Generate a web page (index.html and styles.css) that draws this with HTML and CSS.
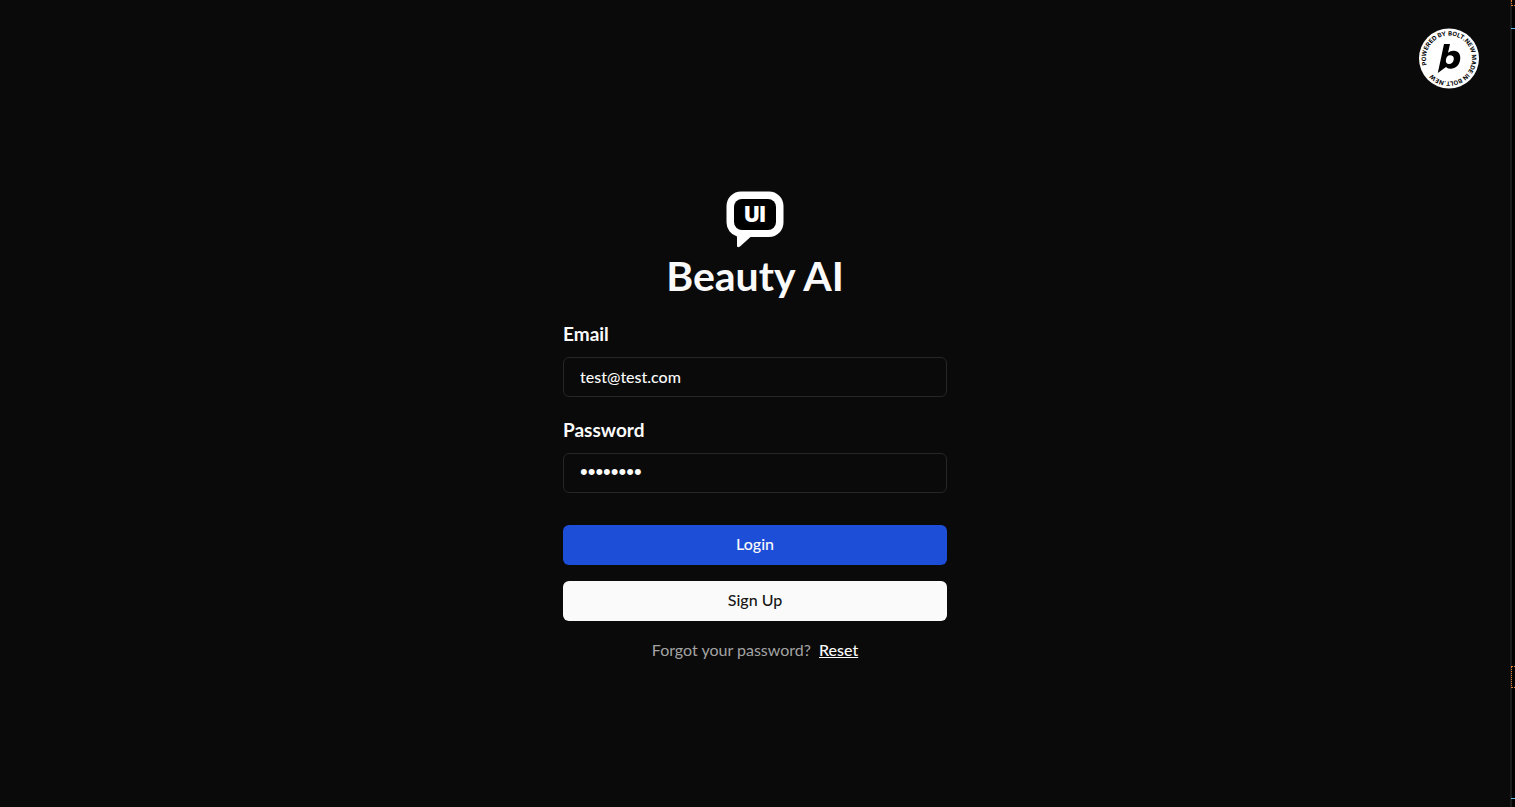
FILE: index.html
```
<!DOCTYPE html>
<html lang="en">
<head>
<meta charset="utf-8">
<meta name="viewport" content="width=device-width, initial-scale=1">
<title>Beauty AI</title>
<link rel="stylesheet" href="styles.css">
</head>
<body>
<main class="page">
  <form class="login">
    <svg class="logo" viewBox="0 0 64 64" aria-hidden="true">
      <path class="logo-bubble" d="M18 4.500H46A14.500 14.500 0 0 1 60.500 19V35.500A14.500 14.500 0 0 1 46 50H27.500L17 59.500Q14 61.500 14 58.500V49.400A14.500 14.500 0 0 1 3.500 35.500V19A14.500 14.500 0 0 1 18 4.500Z"/>
      <rect class="logo-screen" x="11" y="12" width="42" height="31" rx="8"/>
      <text class="logo-text" x="32" y="35" text-anchor="middle">UI</text>
    </svg>
    <h1 class="title">Beauty AI</h1>
    <label class="label" for="email">Email</label>
    <input class="field" id="email" type="email" value="test@test.com">
    <label class="label label-next" for="password">Password</label>
    <input class="field field-password" id="password" type="password" value="password">
    <button class="button button-login" type="submit">Login</button>
    <button class="button button-signup" type="button">Sign Up</button>
    <p class="hint">Forgot your password? <a class="reset" href="#">Reset</a></p>
  </form>
</main>
<aside class="rail">
  <span class="dots dots-top"></span>
  <span class="mark mark-top"></span>
  <span class="dots dots-mid"></span>
  <span class="mark mark-bottom"></span>
</aside>
<a class="badge" href="#" aria-label="Powered by Bolt.new">
  <svg class="badge-art" viewBox="0 0 60 61">
    <circle class="badge-disc" cx="30" cy="30.500" r="30"/>
    <path id="ring" fill="none" d="M7.900 37A23 23 0 0 1 52.100 24A23 23 0 0 1 7.900 37"/>
    <text class="ring-text"><textPath href="#ring">POWERED BY BOLT.NEW MADE IN BOLT.NEW</textPath></text>
    <path class="badge-b" fill-rule="evenodd" d="M25 16H31L29 24.800Q31.500 22.500 35 22.800C39.500 23.100 41.800 26.500 41.200 31.300C40.500 37.300 36.500 40.800 31.800 40.800Q28.800 40.800 27 38.900L18.800 45ZM31 27.300C28.800 27.300 27.200 29.300 26.900 32C26.600 34.500 27.800 36.100 30 36.100C32.500 36.100 34.500 34.100 34.800 31.300C35.100 28.800 33.500 27.300 31 27.300Z"/>
  </svg>
</a>
</body>
</html>
```
FILE: styles.css
```
* {
  box-sizing: border-box;
}

body {
  display: flex;
  min-height: 100vh;
  margin: 0;
  background: #0a0a0a;
  color: #fafafa;
  font-family: Lato, "Open Sans", sans-serif;
  font-size: 16px;
}

.page {
  display: flex;
  flex: 1;
  align-items: center;
  justify-content: center;
  padding-top: 42px;
}

.login {
  display: flex;
  flex-direction: column;
  width: 100%;
  max-width: 384px;
}

.logo {
  align-self: center;
  width: 64px;
  height: 64px;
}

.logo-bubble {
  fill: #fff;
}

.logo-screen {
  fill: #000;
}

.logo-text {
  fill: #fff;
  font-family: Inter, sans-serif;
  font-size: 21px;
  font-weight: 900;
}

.title {
  margin: 5px 0 24px;
  font-size: 41px;
  font-weight: 700;
  line-height: 40px;
  text-align: center;
}

.label {
  margin-bottom: 9px;
  font-size: 19px;
  font-weight: 700;
  line-height: 28px;
}

.label-next {
  margin-top: 19px;
}

.field {
  width: 100%;
  height: 40px;
  padding: 0 16px 2px;
  border: 1px solid #262626;
  border-radius: 6px;
  outline: none;
  background: transparent;
  color: #fafafa;
  font: 500 16px/24px Lato, sans-serif;
}

.field-password {
  font: 22px/24px "Liberation Sans", sans-serif;
}

.button {
  height: 40px;
  padding: 0 16px 2px;
  border: 0;
  border-radius: 6px;
  font: 500 16px/24px Lato, sans-serif;
  cursor: pointer;
}

.button-login {
  margin-top: 32px;
  background: #1d4ed8;
  color: #fafafa;
}

.button-signup {
  margin-top: 16px;
  background: #fafafa;
  color: #171717;
}

.hint {
  margin: 17px 0 0;
  color: #a3a3a3;
  line-height: 24px;
  text-align: center;
}

.reset {
  margin-left: 4px;
  color: #fafafa;
  font-weight: 500;
}

.badge {
  position: absolute;
  top: 28px;
  right: 36px;
  width: 60px;
  height: 61px;
}

.badge-art {
  display: block;
  width: 100%;
  height: 100%;
}

.badge-disc {
  fill: #fff;
}

.badge-b {
  fill: #000;
}

.ring-text {
  fill: #000;
  font-family: Inter, sans-serif;
  font-size: 6px;
  font-weight: 700;
}

.rail {
  position: relative;
  width: 5px;
  border-left: 2px solid #1c1c1c;
  background: #000;
}

.mark {
  position: absolute;
  right: 0;
  width: 4px;
  height: 1px;
  background: #5fb8e6;
}

.mark-top {
  top: 28px;
}

.mark-bottom {
  bottom: 8px;
}

.dots {
  position: absolute;
  right: 0;
  width: 4px;
  border: 1px dotted #e08030;
  border-right: 0;
}

.dots-top {
  top: 0;
  height: 6px;
  border-top: 0;
}

.dots-mid {
  top: 666px;
  height: 22px;
}
```
